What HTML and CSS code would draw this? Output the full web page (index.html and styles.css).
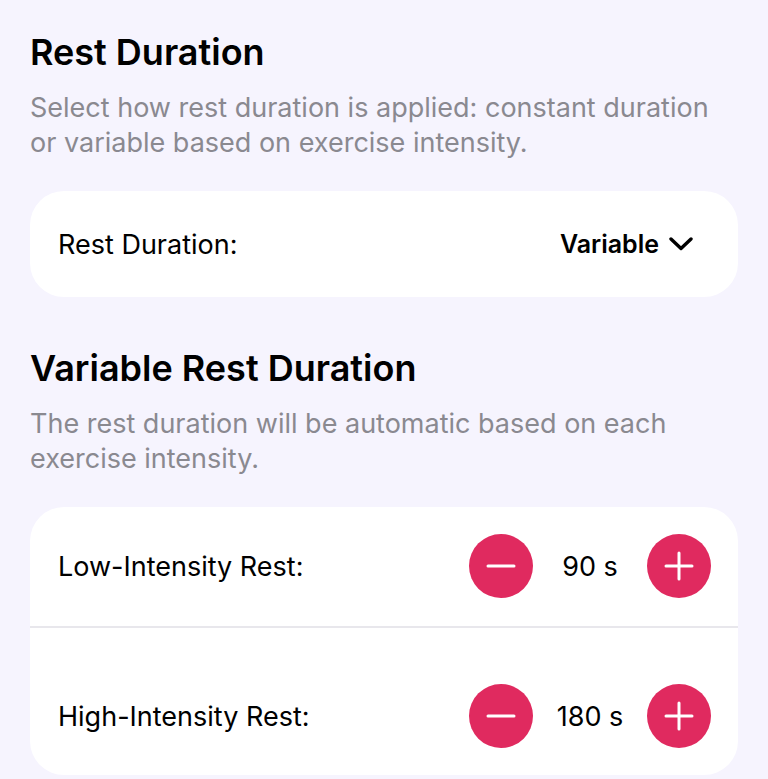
FILE: index.html
```html
<!DOCTYPE html>
<html lang="en">
<head>
    <meta charset="UTF-8">
    <meta name="viewport" content="width=device-width, initial-scale=1.0">
    <title>Rest Duration</title>
    <link rel="stylesheet" href="styles.css">
</head>
<body>

<!-- Modo de descanso -->
<section class="section">
    <h1 class="section-title">Rest Duration</h1>
    <p class="section-desc">Select how rest duration is applied: constant duration or variable based on exercise intensity.</p>
    <div class="card">
        <div class="row picker-row">
            <span class="label">Rest Duration:</span>
            <button class="picker">
                Variable
                <svg class="chevron" width="24" height="14" viewBox="0 0 24 14">
                    <path d="M2 2 L12 11.5 L22 2" fill="none" stroke="#000" stroke-width="3.4" stroke-linecap="round" stroke-linejoin="round"/>
                </svg>
            </button>
        </div>
    </div>
</section>

<!-- Descanso variável -->
<section class="section">
    <h1 class="section-title">Variable Rest Duration</h1>
    <p class="section-desc">The rest duration will be automatic based on each exercise intensity.</p>
    <div class="card">
        <div class="row stepper-row">
            <span class="label">Low-Intensity Rest:</span>
            <div class="stepper">
                <button class="step-btn">
                    <svg width="30" height="30" viewBox="0 0 30 30"><path d="M2 15 H28" stroke="#fff" stroke-width="3" stroke-linecap="round"/></svg>
                </button>
                <span class="value">90 s</span>
                <button class="step-btn">
                    <svg width="30" height="30" viewBox="0 0 30 30"><path d="M2 15 H28 M15 2 V28" stroke="#fff" stroke-width="3" stroke-linecap="round"/></svg>
                </button>
            </div>
        </div>
        <div class="divider"></div>
        <div class="row stepper-row last">
            <span class="label">High-Intensity Rest:</span>
            <div class="stepper">
                <button class="step-btn">
                    <svg width="30" height="30" viewBox="0 0 30 30"><path d="M2 15 H28" stroke="#fff" stroke-width="3" stroke-linecap="round"/></svg>
                </button>
                <span class="value">180 s</span>
                <button class="step-btn">
                    <svg width="30" height="30" viewBox="0 0 30 30"><path d="M2 15 H28 M15 2 V28" stroke="#fff" stroke-width="3" stroke-linecap="round"/></svg>
                </button>
            </div>
        </div>
    </div>
</section>

</body>
</html>
```

FILE: styles.css
```css
* {
    margin: 0;
    padding: 0;
    box-sizing: border-box;
    font-family: Inter, "Open Sans", sans-serif;
}
body {
    background: #f6f4fe;
    color: #000;
    padding: 30px 30px 0 30px;
    overflow: hidden;
}
.section {
    margin-bottom: 49px;
}
.section-title {
    font-size: 36px;
    font-weight: 600;
    line-height: 44px;
}
.section-desc {
    margin-top: 16px;
    font-size: 27px;
    line-height: 35px;
    color: #8a8990;
    padding-right: 10px;
}
.card {
    margin-top: 31px;
    background: #fff;
    border-radius: 34px;
    overflow: hidden;
}
.row {
    display: flex;
    align-items: center;
    justify-content: space-between;
    padding: 0 27px 0 28px;
}
.label {
    font-size: 27px;
}
.picker-row {
    height: 106px;
    padding-right: 45px;
}
.picker {
    display: flex;
    align-items: center;
    gap: 10px;
    border: none;
    background: none;
    font-size: 25px;
    font-weight: 600;
    color: #000;
    cursor: pointer;
}
.stepper-row {
    padding-top: 27px;
    padding-bottom: 28px;
}
.stepper-row.last {
    padding-top: 56px;
    padding-bottom: 27px;
}
.stepper {
    display: flex;
    align-items: center;
}
.step-btn {
    width: 64px;
    height: 64px;
    border-radius: 50%;
    border: none;
    background: #e02a5f;
    display: flex;
    align-items: center;
    justify-content: center;
    cursor: pointer;
}
.value {
    width: 114px;
    text-align: center;
    font-size: 27px;
}
.divider {
    height: 2px;
    background: #e8e7ec;
}
```
